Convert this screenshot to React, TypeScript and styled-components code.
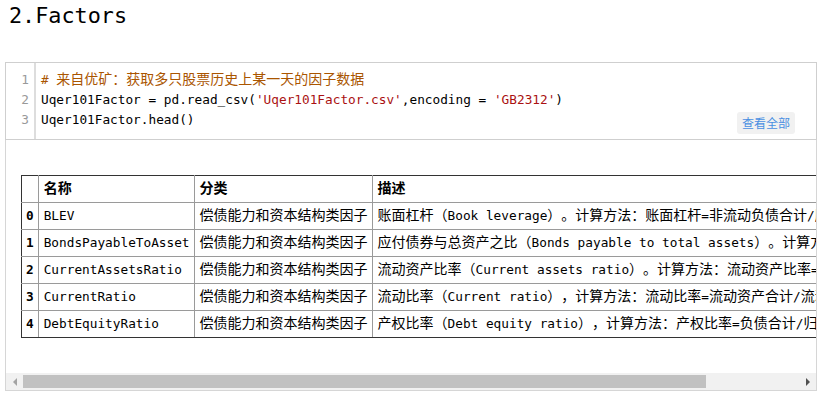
import React from "react";
import styled, { createGlobalStyle } from "styled-components";

const GlobalStyle = createGlobalStyle`
    body {
        margin: 0;
        background: #fff;
        font-family: "DejaVu Sans Mono", "Noto Sans CJK SC", monospace;
    }
`;

const Page = styled.div`
    width: 821px;
    height: 396px;
    overflow: hidden;
`;
const Title = styled.h2`
    margin: 0;
    padding-left: 9px;
    height: 32px;
    line-height: 32px;
    font-size: 21.8px;
    font-weight: normal;
    color: #000;
    font-family: "DejaVu Sans Mono", monospace;
`;
const Cell = styled.div`
    margin: 30px 0 0 5px;
    width: 812px;
`;
const CodeBox = styled.div`
    position: relative;
    display: flex;
    border: 1px solid #cfcfcf;
    font-size: 12.75px;
    line-height: 20px;
`;
const Gutter = styled.div`
    box-sizing: border-box;
    width: 30px;
    padding: 7px 5px 9px 0;
    border-right: 2px solid #dddddd;
    text-align: right;
    color: #999;
`;
const Code = styled.div`
    padding: 7px 0 9px 5px;
    color: #000;
    white-space: pre;
`;
const CodeLine = styled.div`
    height: 20px;
`;
const Tok = styled.span<{ $kind?: "comment" | "string" }>`
    color: ${p => p.$kind === "comment" ? "#aa5500" : p.$kind === "string" ? "#aa1111" : "inherit"};
`;
const Han = styled.span`
    font-family: "Noto Sans CJK SC", sans-serif;
    font-size: 14px;
    line-height: 12px;
    text-spacing-trim: space-all;
`;
// 查看全部 sits over the bottom-right of the code box
const ViewAll = styled.button`
    position: absolute;
    right: 21px;
    bottom: 5px;
    height: 22px;
    padding: 0 5px;
    border: none;
    border-radius: 3px;
    background: #f1f1f1;
    color: #4a8fe2;
    font-family: "Noto Sans CJK SC", sans-serif;
    font-size: 12px;
    line-height: 22px;
`;
const Output = styled.div`
    border: 1px solid #d6d6d6;
    border-top: none;
    padding-top: 35px;
`;
const TableScroll = styled.div`
    overflow: hidden;
    padding: 0 0 35px 15px;
`;
const Table = styled.table`
    border-collapse: collapse;
    font-size: 12.75px;
    line-height: 18px;
    color: #000;
    th, td {
        box-sizing: border-box;
        height: 27px;
        border: 1px solid #9a9a9a;
        padding: 0 4px 0 5px;
        white-space: nowrap;
        vertical-align: middle;
        text-align: left;
    }
    th { font-weight: bold; }
    thead th { border-top-color: #333; }
    tr > *:first-child { border-left-color: #333; padding-left: 4px; }
    tbody tr:last-child td, tbody tr:last-child th { border-bottom-color: #333; }
`;
const ScrollTrack = styled.div`
    display: flex;
    align-items: center;
    height: 17px;
    background: #f1f1f1;
`;
const ArrowBtn = styled.div<{ $dir: "left" | "right"; $color: string }>`
    width: 17px;
    height: 17px;
    display: flex;
    align-items: center;
    justify-content: center;
    &::before {
        content: "";
        width: 0;
        height: 0;
        border-top: 4px solid transparent;
        border-bottom: 4px solid transparent;
        ${p => p.$dir === "left"
            ? `border-right: 4px solid ${p.$color};`
            : `border-left: 4px solid ${p.$color};`}
    }
`;
const Thumb = styled.div`
    width: 683px;
    height: 13px;
    background: #c1c1c1;
`;
const Spacer = styled.div`
    flex: 1;
`;

const CJK = /([\u2E80-\u9FFF\u3000-\u303F\uFF00-\uFFEF]+)/;

// latin text in the mono face, chinese runs a bit larger like the fallback font
function Mixed({ text }: { text: string }) {
    return (
        <>
            {text.split(CJK).map((part, i) =>
                part === "" ? null : CJK.test(part)
                    ? <Han key={i}>{part}</Han>
                    : <React.Fragment key={i}>{part}</React.Fragment>
            )}
        </>
    );
}

interface Factor {
    name: string;
    kind: string;
    desc: string;
}

const factors: Factor[] = [
    { name: "BLEV", kind: "偿债能力和资本结构类因子", desc: "账面杠杆（Book leverage）。计算方法：账面杠杆=非流动负债合计/股东权益合计" },
    { name: "BondsPayableToAsset", kind: "偿债能力和资本结构类因子", desc: "应付债券与总资产之比（Bonds payable to total assets）。计算方法：应付债券与总资产之比=应付债券/总资产" },
    { name: "CurrentAssetsRatio", kind: "偿债能力和资本结构类因子", desc: "流动资产比率（Current assets ratio）。计算方法：流动资产比率=流动资产合计/总资产" },
    { name: "CurrentRatio", kind: "偿债能力和资本结构类因子", desc: "流动比率（Current ratio），计算方法：流动比率=流动资产合计/流动负债合计" },
    { name: "DebtEquityRatio", kind: "偿债能力和资本结构类因子", desc: "产权比率（Debt equity ratio），计算方法：产权比率=负债合计/归属于母公司所有者权益合计" },
];

function App() {
    return (
        <Page>
            <GlobalStyle />
            <Title>2.Factors</Title>
            <Cell>
                <CodeBox>
                    <Gutter>
                        <div>1</div>
                        <div>2</div>
                        <div>3</div>
                    </Gutter>
                    <Code>
                        <CodeLine><Tok $kind="comment"><Mixed text="# 来自优矿：获取多只股票历史上某一天的因子数据" /></Tok></CodeLine>
                        <CodeLine>
                            Uqer101Factor = pd.read_csv(<Tok $kind="string">'Uqer101Factor.csv'</Tok>,encoding = <Tok $kind="string">'GB2312'</Tok>)
                        </CodeLine>
                        <CodeLine>Uqer101Factor.head()</CodeLine>
                    </Code>
                    <ViewAll>查看全部</ViewAll>
                </CodeBox>
                <Output>
                    <TableScroll>
                        <Table>
                            <thead>
                                <tr>
                                    <th></th>
                                    <th><Mixed text="名称" /></th>
                                    <th><Mixed text="分类" /></th>
                                    <th><Mixed text="描述" /></th>
                                </tr>
                            </thead>
                            <tbody>
                                {factors.map((f, i) => (
                                    <tr key={f.name}>
                                        <th>{i}</th>
                                        <td>{f.name}</td>
                                        <td><Mixed text={f.kind} /></td>
                                        <td><Mixed text={f.desc} /></td>
                                    </tr>
                                ))}
                            </tbody>
                        </Table>
                    </TableScroll>
                    <ScrollTrack>
                        <ArrowBtn $dir="left" $color="#a3a3a3" />
                        <Thumb />
                        <Spacer />
                        <ArrowBtn $dir="right" $color="#505050" />
                    </ScrollTrack>
                </Output>
            </Cell>
        </Page>
    );
}

export default App;
